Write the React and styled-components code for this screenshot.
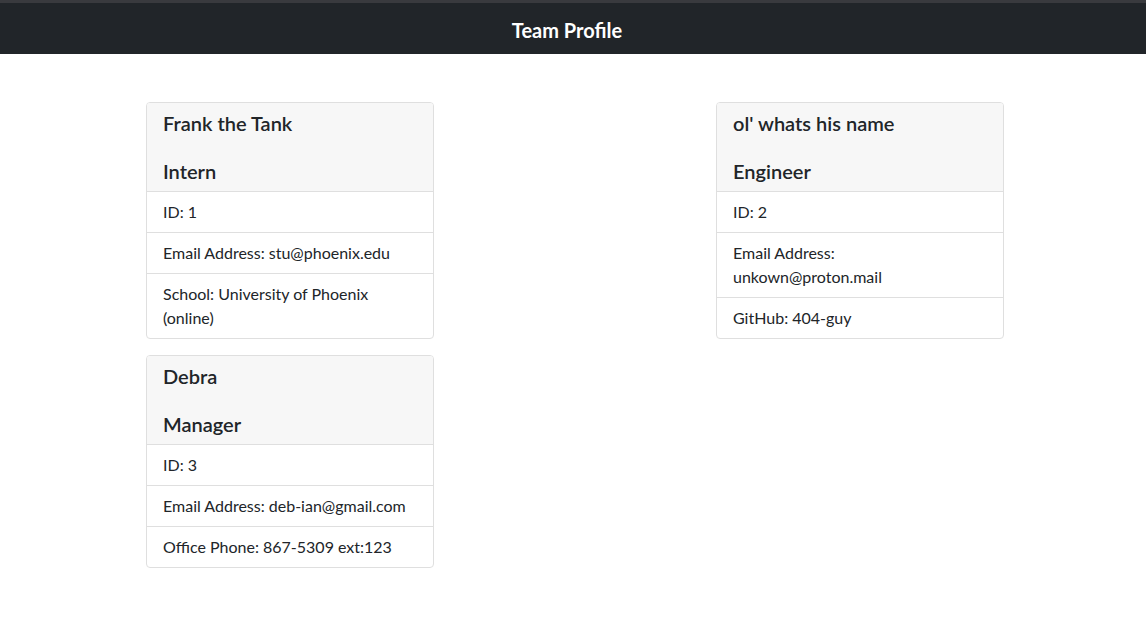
import styled, { createGlobalStyle } from "styled-components";

const GlobalStyle = createGlobalStyle`
  * {
    box-sizing: border-box;
  }
  body {
    margin: 0;
    background: #fff;
    color: #212529;
    font-family: Lato, "Open Sans", sans-serif;
    font-size: 16px;
    line-height: 1.5;
  }
`;

const team = [
  {
    name: "Frank the Tank",
    role: "Intern",
    id: 1,
    email: "stu@phoenix.edu",
    extra: "School: University of Phoenix (online)",
  },
  {
    name: "ol' whats his name",
    role: "Engineer",
    id: 2,
    email: "unkown@proton.mail",
    extra: "GitHub: 404-guy",
  },
  {
    name: "Debra",
    role: "Manager",
    id: 3,
    email: "deb-ian@gmail.com",
    extra: "Office Phone: 867-5309 ext:123",
  },
];

const Navbar = styled.nav`
  height: 54px;
  background: #212529;
  border-top: 3px solid #393a3e;
  display: flex;
  align-items: center;
  justify-content: center;
  padding-right: 12px;
`;

const Brand = styled.span`
  color: #fff;
  font-size: 20px;
  font-weight: 700;
  line-height: 1.2;
  padding-top: 3px;
`;

const Grid = styled.main`
  display: grid;
  grid-template-columns: 288px 288px;
  grid-template-rows: auto auto;
  align-items: start;
  column-gap: 282px;
  row-gap: 16px;
  padding: 48px 0 0 146px;
`;

const Card = styled.div`
  width: 288px;
  border: 1px solid #dfdfdf;
  border-radius: 4px;
  overflow: hidden;
  grid-row: ${(p) => p.$row};
  grid-column: ${(p) => p.$col};
`;

const Header = styled.h5`
  margin: 0;
  padding: 8px 16px;
  background: #f7f7f7;
  border-bottom: 1px solid #dfdfdf;
  font-size: 20px;
  font-weight: 600;
  line-height: 24px;
`;

const List = styled.ul`
  list-style: none;
  margin: 0;
  padding: 0;
`;

const Item = styled.li`
  padding: 8px 16px;
  & + & {
    border-top: 1px solid #dfdfdf;
  }
`;

const places = [
  { row: 1, col: 1 },
  { row: 1, col: 2 },
  { row: 2, col: 1 },
];

export default function App() {
  return (
    <>
      <GlobalStyle />
      <Navbar>
        <Brand>Team Profile</Brand>
      </Navbar>
      <Grid>
        {team.map((m, i) => (
          <Card key={m.id} $row={places[i].row} $col={places[i].col}>
            <Header>
              {m.name}
              <br />
              <br />
              {m.role}
            </Header>
            <List>
              <Item>ID: {m.id}</Item>
              <Item>Email Address: {m.email}</Item>
              <Item>{m.extra}</Item>
            </List>
          </Card>
        ))}
      </Grid>
    </>
  );
}
